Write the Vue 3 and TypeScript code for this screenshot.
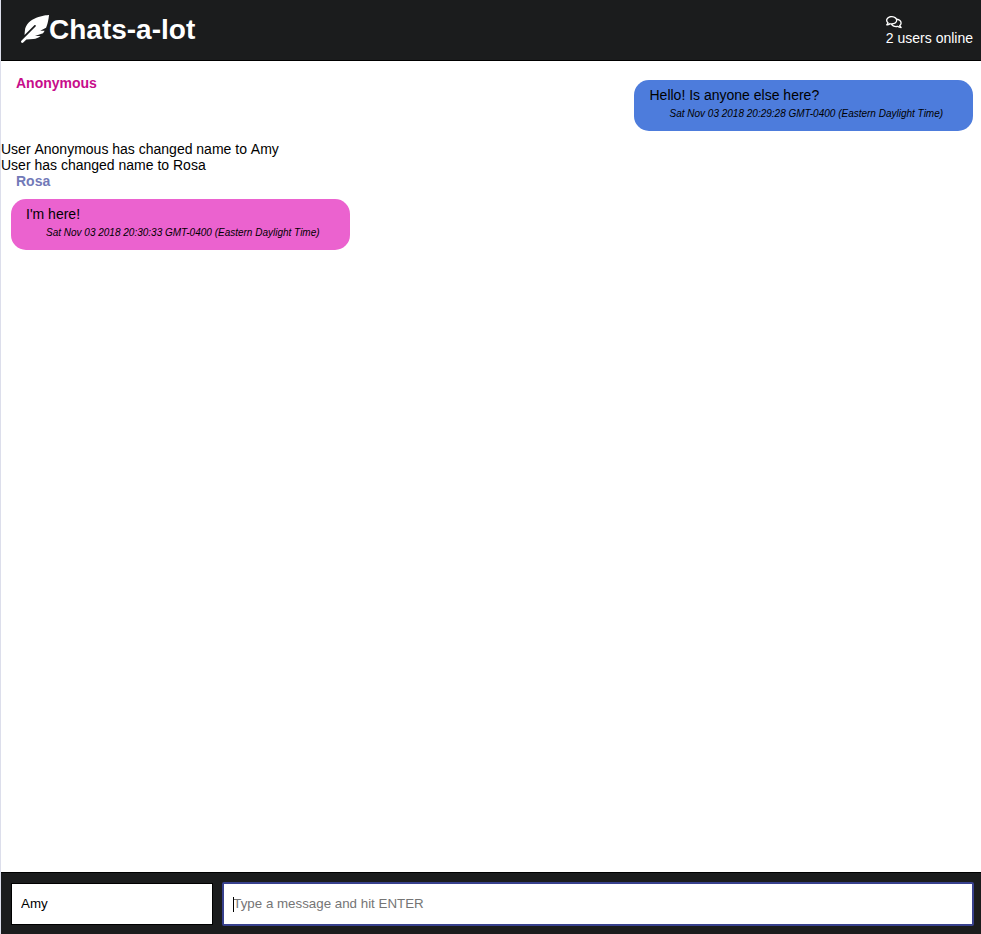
<script setup lang="ts">
import { ref } from 'vue'

interface ChatMessage {
  text: string
  time: string
}

const userCount = ref<number>(2)
const userName = ref<string>('Amy')
const draft = ref<string>('')
const mine: ChatMessage = {
  text: 'Hello! Is anyone else here?',
  time: 'Sat Nov 03 2018 20:29:28 GMT-0400 (Eastern Daylight Time)',
}
const theirs: ChatMessage = {
  text: "I'm here!",
  time: 'Sat Nov 03 2018 20:30:33 GMT-0400 (Eastern Daylight Time)',
}
const notices: string[] = [
  'User Anonymous has changed name to Amy',
  'User has changed name to Rosa',
]
</script>

<template>
  <div class="chat">
    <header class="navbar">
      <h1 class="brand">
        <svg class="feather" viewBox="0 0 512 512" aria-hidden="true">
          <path d="M512 0C460.22 3.56 96.44 38.2 71.01 287.61c-3.09 26.66-4.84 53.44-5.99 80.24l178.87-178.69c6.25-6.25 16.4-6.25 22.65 0s6.25 16.38 0 22.63L7.04 471.03c-9.38 9.37-9.38 24.57 0 33.94 9.38 9.37 24.59 9.37 33.98 0l57.13-57.07c42.09-.14 84.15-2.53 125.96-7.36 53.48-5.44 97.02-26.47 132.58-56.54H255.74l146.79-48.88c11.25-14.89 21.37-30.71 30.45-47.12h-81.14l106.54-53.21C500.29 132.86 510.19 26.26 512 0z" />
        </svg>
        <span>Chats-a-lot</span>
      </h1>
      <div class="online">
        <svg class="bubbles" viewBox="0 0 576 512" aria-hidden="true">
          <path d="M532 386.2c27.5-27.1 44-61.1 44-98.2 0-80-76.5-146.1-176.2-157.9C368.3 72.5 294.3 32 208 32 93.1 32 0 103.6 0 192c0 37 16.5 71 44 98.2-15.3 30.7-37.3 54.5-37.7 54.9-6.3 6.7-8.1 16.5-4.4 25 3.6 8.5 12 14 21.2 14 53.5 0 96.7-20.2 125.2-38.8 9.2 2.1 18.7 3.7 28.4 4.9C208.1 407.6 281.8 448 368 448c20.8 0 40.8-2.4 59.8-6.8C456.3 459.7 499.4 480 553 480c9.2 0 17.5-5.5 21.2-14 3.6-8.5 1.9-18.3-4.4-25-.4-.3-22.5-24.1-37.8-54.8zm-392.8-92.3L122.1 305c-14.1 9.1-28.5 16.3-43.1 21.4 2.7-4.7 5.4-9.7 8-14.8l15.5-31.1L77.7 256C64.2 242.6 48 220.7 48 192c0-60.7 73.3-112 160-112s160 51.3 160 112-73.3 112-160 112c-16.5 0-33-1.9-49-5.6l-19.8-4.5zM498.3 352l-24.7 24.4 15.5 31.1c2.6 5.1 5.3 10.1 8 14.8-14.6-5.1-29-12.3-43.1-21.4l-17.1-11.1-19.9 4.6c-16 3.7-32.5 5.6-49 5.6-54 0-102.2-20.1-131.3-49.7C338 339.5 416 272.9 416 192c0-3.4-.4-6.7-.7-10C479.7 196.5 528 238.8 528 288c0 28.7-16.2 50.6-29.7 64z" />
        </svg>
        <span>{{ userCount }} users online</span>
      </div>
    </header>

    <main class="messages">
      <section class="row">
        <span class="sender anonymous">Anonymous</span>
        <div class="bubble own">
          <p class="text">{{ mine.text }}</p>
          <p class="time">{{ mine.time }}</p>
        </div>
      </section>
      <p v-for="notice in notices" :key="notice" class="notice">{{ notice }}</p>
      <section class="incoming">
        <span class="sender rosa">Rosa</span>
        <div class="bubble other">
          <p class="text">{{ theirs.text }}</p>
          <p class="time">{{ theirs.time }}</p>
        </div>
      </section>
    </main>

    <footer class="composer">
      <input v-model="userName" class="name" type="text" aria-label="Name" />
      <div class="field">
        <span class="caret"></span>
        <input v-model="draft" class="draft" type="text" placeholder="Type a message and hit ENTER" />
      </div>
    </footer>
  </div>
</template>

<style>
body {
  margin: 0;
  background: #fff;
}
</style>

<style scoped>
.chat {
  box-sizing: border-box;
  display: flex;
  flex-direction: column;
  height: 100vh;
  overflow: hidden;
  border-left: 1px solid #dcdeeb;
  color: #000;
  font: 14px/16px "Liberation Sans", Arial, sans-serif;
}

.navbar {
  box-sizing: border-box;
  display: flex;
  flex: none;
  align-items: flex-start;
  justify-content: space-between;
  height: 61px;
  padding: 14px 8px 0 20px;
  border-bottom: 1px solid #000;
  background: #1b1c1d;
  color: #fff;
}

.brand {
  display: flex;
  align-items: center;
  margin: 0;
  font-size: 28px;
  line-height: 32px;
}

.feather {
  width: 28px;
  height: 28px;
  margin-top: -3px;
  fill: currentColor;
}

.online {
  display: flex;
  flex-direction: column;
}

.bubbles {
  width: 15.75px;
  height: 14px;
  margin: 0.75px 0 1.25px;
  fill: currentColor;
}

.messages {
  flex: 1;
  padding-top: 14px;
}

p {
  margin: 0;
}

.notice {
  font-kerning: none;
}

.row {
  display: flex;
  align-items: flex-start;
  justify-content: space-between;
  height: 66px;
  padding-right: 8px;
}

.sender {
  display: block;
  padding-left: 15px;
  font-weight: bold;
}

.anonymous {
  color: #c70d8b;
}

.rosa {
  color: #7279b8;
}

.bubble {
  box-sizing: border-box;
  width: 339px;
  height: 51px;
  padding: 7px 15px;
  border-radius: 15px;
}

.own {
  margin-top: 5px;
  padding-left: 15.5px;
  background: #4d7cdc;
}

.other {
  margin: 10px 0 0 10px;
  background: #eb62cf;
}

.time {
  padding: 5px 0 0 20px;
  font-size: 10px;
  font-style: italic;
  line-height: 12px;
  white-space: nowrap;
}

.composer {
  box-sizing: border-box;
  display: flex;
  flex: none;
  gap: 9px;
  height: 62px;
  padding: 9px 7px 8px 10px;
  border-top: 1px solid #000;
  background: #1b1c1d;
}

.name,
.draft {
  box-sizing: border-box;
  margin: 0;
  background: #fff;
  color: #000;
  font: 13.333px "Liberation Sans", Arial, sans-serif;
}

.name {
  width: 202px;
  height: 42px;
  margin-top: 1px;
  padding: 0 9px 1px;
  border: 1px solid #000;
  border-radius: 0;
}

.field {
  position: relative;
  flex: 1;
}

.draft {
  width: 100%;
  height: 44px;
  padding: 0 9px 1px 9.3px;
  border: 2px solid #38418e;
  border-radius: 2px;
  outline: none;
}

.draft::placeholder {
  color: #757575;
}

.caret {
  position: absolute;
  top: 15px;
  left: 11px;
  width: 1px;
  height: 15px;
  background: #000;
}
</style>
